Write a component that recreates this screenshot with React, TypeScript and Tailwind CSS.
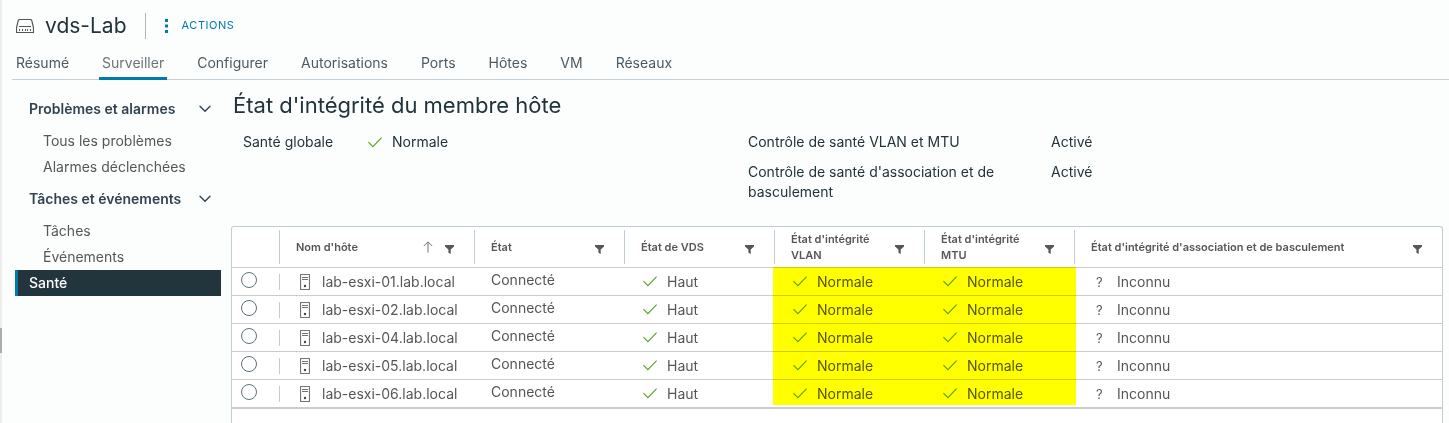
import React from "react";

const tabs = ["Résumé", "Surveiller", "Configurer", "Autorisations", "Ports", "Hôtes", "VM", "Réseaux"];

const sections = [
  { title: "Problèmes et alarmes", items: ["Tous les problèmes", "Alarmes déclenchées"] },
  { title: "Tâches et événements", items: ["Tâches", "Événements"] },
];

const hosts = [
  "lab-esxi-01.lab.local",
  "lab-esxi-02.lab.local",
  "lab-esxi-04.lab.local",
  "lab-esxi-05.lab.local",
  "lab-esxi-06.lab.local",
];

function SwitchIcon() {
  return (
    <svg width="18" height="16" viewBox="0 0 18 16" fill="none" stroke="#565656" aria-hidden="true">
      <path d="M3.200 1.500h11.600l1 1.100 1.700 7.200v4.700H.5V9.800l1.700-7.200z" strokeWidth="1.200" strokeLinejoin="round" />
      <path d="M3 8.500h12" />
      <path d="M3.500 11v2M6.500 11v2M9.500 11v2M11.500 11v2M14.500 11v2" />
    </svg>
  );
}

function Chevron() {
  return (
    <svg width="12" height="8" viewBox="0 0 12 8" fill="none" stroke="#314351" strokeWidth="1.4" aria-hidden="true">
      <path d="M1 1.300l5 5 5-5" strokeLinecap="round" strokeLinejoin="round" />
    </svg>
  );
}

function Check() {
  return (
    <svg width="14" height="11" viewBox="0 0 14 11" fill="none" stroke="#5aa220" className="shrink-0" aria-hidden="true">
      <path d="M.4 5.200l4.500 4.500L13.600.7" strokeWidth="1.100" />
    </svg>
  );
}

function ServerIcon() {
  return (
    <svg width="10" height="16" viewBox="0 0 10 16" fill="none" stroke="#737373" className="shrink-0" aria-hidden="true">
      <rect x=".5" y=".5" width="9" height="15" rx=".5" strokeWidth="1.200" />
      <path d="M2 3.500h6M2 5.500h6" />
      <circle cx="5" cy="12" r="1.200" fill="#454545" stroke="none" />
    </svg>
  );
}

function Filter({ label }: { label: string }) {
  return (
    <button type="button" aria-label={`Filtrer ${label}`} className="mt-1 shrink-0">
      <svg width="9" height="9" viewBox="0 0 9 9" fill="#565656" aria-hidden="true">
        <path d="M0 0h9v1.400L5.700 4.600V9L3.400 7.700V4.600L0 1.400z" />
      </svg>
    </button>
  );
}

function HeaderCell({ label, sorted = false, last = false }: { label: string; sorted?: boolean; last?: boolean }) {
  return (
    <th scope="col" className="border-b border-[#cccccc] py-[3px] text-left font-semibold">
      <div className={`flex h-[34px] items-center justify-between pl-4 pr-5 ${last ? "" : "border-r border-[#c1cdd4]"}`}>
        <span className="leading-4">{label}</span>
        <span className="flex items-center gap-3">
          {sorted && (
            <svg width="10" height="12" viewBox="0 0 10 12" fill="none" stroke="#737373" aria-label="Tri croissant">
              <path d="M5 11.500V1M.8 5L5 .8 9.200 5" />
            </svg>
          )}
          <Filter label={label} />
        </span>
      </div>
    </th>
  );
}

function StatusCell({ text, icon }: { text: string; icon: React.ReactNode }) {
  return (
    <td>
      <div className="flex items-center pl-[18px]">
        <span className="flex w-6 items-center">{icon}</span>
        {text}
      </div>
    </td>
  );
}

export default function App() {
  return (
    <div className="flex min-h-screen bg-[#fcfefd] font-['Inter',sans-serif] text-sm text-[#21333b]">
      <div className="flex w-[2px] shrink-0 flex-col bg-[#eeeeee]">
        <div className="mt-[328px] h-[25px] bg-[#acacac]" />
      </div>
      <div className="flex min-w-0 flex-1 flex-col">
        <header className="flex h-[50px] items-center pl-[14px] pt-[2px]">
          <SwitchIcon />
          <h1 className="pl-[11px] text-[21px] leading-7">vds-Lab</h1>
          <div className="ml-[18px] h-[26px] w-px bg-[#b3b3b3]" />
          <button type="button" className="ml-[19px] flex items-center gap-[14px] text-[11px] tracking-wider text-[#0079ad]">
            <svg width="3" height="14" viewBox="0 0 3 14" fill="#0079ad" aria-hidden="true">
              <path d="M0 0h3v3H0zM0 5.500h3v3H0zM0 11h3v3H0z" />
            </svg>
            ACTIONS
          </button>
        </header>

        <nav className="ml-[10px] flex h-[30px] border-b border-[#c8d1d6] pl-[1px] text-[#4b5a62]">
          {tabs.map((tab) => (
            <a
              key={tab}
              href="#"
              aria-current={tab === "Surveiller" ? "page" : undefined}
              className={`mr-[27px] -mb-px px-[3px] leading-[26px] ${
                tab === "Surveiller" ? "border-b-[3px] border-[#0079ad] text-[#6b7479]" : ""
              }`}
            >
              {tab}
            </a>
          ))}
        </nav>

        <div className="flex flex-1">
          <aside className="ml-[13px] w-[206px] shrink-0 pt-[10px]">
            {sections.map((section) => (
              <section key={section.title}>
                <button
                  type="button"
                  aria-expanded="true"
                  className="flex h-[38px] w-full items-center justify-between pl-[14px] pr-[10px] font-semibold text-[#314351]"
                >
                  {section.title}
                  <Chevron />
                </button>
                {section.items.map((item) => (
                  <a key={item} href="#" className="block h-[26px] pl-7 leading-[26px] text-[#565656]">
                    {item}
                  </a>
                ))}
              </section>
            ))}
            <a
              href="#"
              aria-current="page"
              className="block h-[26px] border-l-[3px] border-[#0079ad] bg-[#22343c] pl-[11px] font-medium leading-[26px] text-white"
            >
              Santé
            </a>
          </aside>

          <main className="ml-[10px] mr-[6px] flex min-w-0 flex-1 flex-col">
            <h2 className="pl-[2px] pt-[11px] text-[22px] leading-7">État d'intégrité du membre hôte</h2>
            <div className="mt-[13px] grid grid-cols-[5fr_3fr_4fr] gap-y-[10px] leading-5">
              <div className="flex items-center pl-3">
                <span className="w-[125px]">Santé globale</span>
                <Check />
                <span className="pl-[10px]">Normale</span>
              </div>
              <div className="pl-3">Contrôle de santé VLAN et MTU</div>
              <div className="pl-3">Activé</div>
              <div className="col-start-2 pl-3 pr-8">Contrôle de santé d'association et de basculement</div>
              <div className="pl-3">Activé</div>
            </div>

            <div className="relative mt-6 flex-1 rounded-t-[3px] border border-b-0 border-[#c1cdd4] bg-white text-[#565656]">
              <table className="w-full table-fixed border-separate border-spacing-0">
                <colgroup>
                  <col className="w-12" />
                  <col className="w-[195px]" />
                  <col className="w-[150px]" />
                  <col className="w-[150px]" />
                  <col className="w-[150px]" />
                  <col className="w-[150px]" />
                  <col />
                </colgroup>
                <thead className="text-[11px]">
                  <tr>
                    <td className="border-b border-[#cccccc] py-[3px]">
                      <div className="h-[34px] border-r border-[#c1cdd4]" />
                    </td>
                    <HeaderCell label="Nom d'hôte" sorted />
                    <HeaderCell label="État" />
                    <HeaderCell label="État de VDS" />
                    <HeaderCell label="État d'intégrité VLAN" />
                    <HeaderCell label="État d'intégrité MTU" />
                    <HeaderCell label="État d'intégrité d'association et de basculement" last />
                  </tr>
                </thead>
                <tbody className="leading-5 [&_td]:h-7 [&_td]:border-b [&_td]:border-[#cccccc] [&_tr:last-child_td]:h-[29px] [&_tr:last-child_td]:border-b-2">
                  {hosts.map((host) => (
                    <tr key={host}>
                      <td>
                        <div className="flex h-4 items-center border-r border-[#c1cdd4] pl-[9px]">
                          <input
                            type="radio"
                            name="host"
                            aria-label={host}
                            className="mb-1 size-4 appearance-none rounded-full border border-[#5d717d] bg-white"
                          />
                        </div>
                      </td>
                      <td>
                        <div className="flex items-center gap-3 pl-5">
                          <ServerIcon />
                          {host}
                        </div>
                      </td>
                      <td>
                        <div className="pb-1 pl-4">Connecté</div>
                      </td>
                      <StatusCell text="Haut" icon={<Check />} />
                      <StatusCell text="Normale" icon={<Check />} />
                      <StatusCell text="Normale" icon={<Check />} />
                      <StatusCell text="Inconnu" icon={<span className="pl-[3px] text-[13px]">?</span>} />
                    </tr>
                  ))}
                </tbody>
              </table>
              <div className="pointer-events-none absolute left-[541px] top-10 h-[138px] w-[303px] bg-[#ffff00] mix-blend-multiply" />
            </div>
          </main>
        </div>
      </div>
    </div>
  );
}
